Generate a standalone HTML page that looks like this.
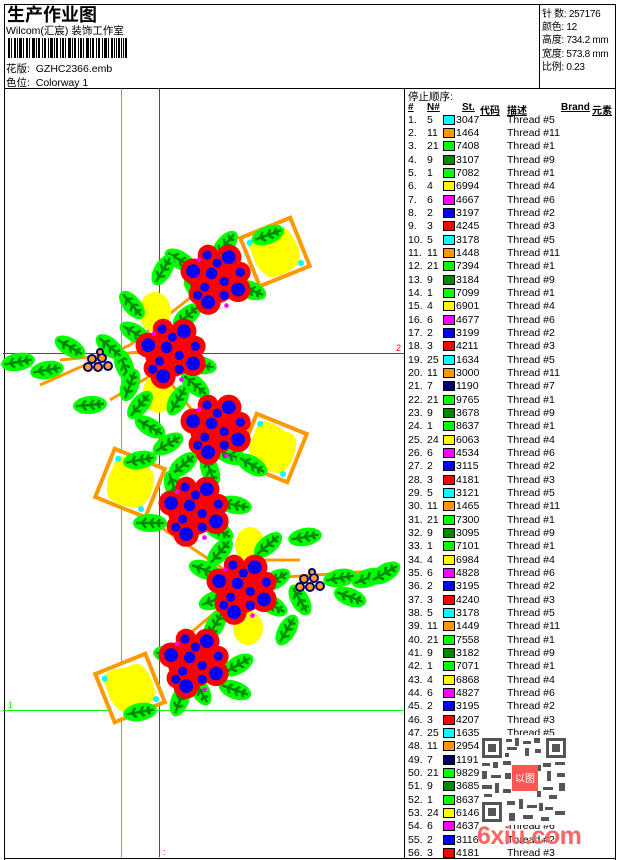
<!DOCTYPE html>
<html><head><meta charset="utf-8">
<style>
*{margin:0;padding:0;box-sizing:border-box}
body{width:620px;height:860px;background:#fff;position:relative;overflow:hidden;font-family:"Liberation Sans","Noto Sans CJK SC",sans-serif;font-size:10.5px;color:#000}
.ab{position:absolute}
.ln{position:absolute;background:#000}
.r{position:absolute;left:408px;height:13px;line-height:13px;white-space:nowrap;font-size:10.5px}
.r span{display:inline-block;vertical-align:top}
.r .a{width:19px}.r .b{width:16px}.r .c{width:51px}
.r i{display:inline-block;width:12px;height:10px;border:1px solid #000;margin:1px 1px 0 0;vertical-align:top}
.h span{position:absolute;font-weight:bold;text-decoration:underline;font-size:10px}
.rt div{position:absolute;left:542px;font-size:10px;white-space:nowrap;letter-spacing:-0.3px}
</style></head><body>
<div class="ln" style="left:4px;top:4px;width:612px;height:1px"></div>
<div class="ln" style="left:4px;top:4px;width:1px;height:856px"></div>
<div class="ln" style="left:615px;top:4px;width:1px;height:856px"></div>
<div class="ln" style="left:4px;top:858px;width:612px;height:1px"></div>
<div class="ln" style="left:4px;top:88px;width:612px;height:1px"></div>
<div class="ln" style="left:539px;top:4px;width:1px;height:84px"></div>
<div class="ln" style="left:404px;top:88px;width:1px;height:771px"></div>

<div class="ab" style="left:7px;top:1px;font-size:18px;font-weight:bold">生产作业图</div>
<div class="ab" style="left:6px;top:23px;font-size:10.5px">Wilcom(汇宸) 装饰工作室</div>
<svg class="ab" style="left:8px;top:38px" width="120" height="20">
<g fill="#000">
<rect x="0" y="0" width="2" height="20"/><rect x="3" y="0" width="1" height="20"/><rect x="6" y="0" width="2" height="20"/><rect x="9" y="0" width="1" height="20"/><rect x="11" y="0" width="3" height="20"/><rect x="15" y="0" width="1" height="20"/><rect x="18" y="0" width="2" height="20"/><rect x="21" y="0" width="1" height="20"/><rect x="24" y="0" width="3" height="20"/><rect x="28" y="0" width="1" height="20"/><rect x="30" y="0" width="2" height="20"/><rect x="34" y="0" width="1" height="20"/><rect x="36" y="0" width="2" height="20"/><rect x="40" y="0" width="1" height="20"/><rect x="42" y="0" width="3" height="20"/><rect x="46" y="0" width="1" height="20"/><rect x="48" y="0" width="2" height="20"/><rect x="52" y="0" width="1" height="20"/><rect x="54" y="0" width="2" height="20"/><rect x="57" y="0" width="1" height="20"/><rect x="60" y="0" width="3" height="20"/><rect x="64" y="0" width="1" height="20"/><rect x="66" y="0" width="2" height="20"/><rect x="70" y="0" width="1" height="20"/><rect x="72" y="0" width="2" height="20"/><rect x="75" y="0" width="1" height="20"/><rect x="78" y="0" width="3" height="20"/><rect x="82" y="0" width="1" height="20"/><rect x="84" y="0" width="2" height="20"/><rect x="88" y="0" width="1" height="20"/><rect x="90" y="0" width="2" height="20"/><rect x="94" y="0" width="1" height="20"/><rect x="96" y="0" width="3" height="20"/><rect x="100" y="0" width="1" height="20"/><rect x="103" y="0" width="2" height="20"/><rect x="106" y="0" width="1" height="20"/><rect x="108" y="0" width="1" height="20"/><rect x="110" y="0" width="2" height="20"/><rect x="113" y="0" width="1" height="20"/><rect x="115" y="0" width="1" height="20"/><rect x="117" y="0" width="2" height="20"/>
</g></svg>
<div class="ab" style="left:6px;top:61px">花版:&nbsp; GZHC2366.emb</div>
<div class="ab" style="left:6px;top:75px">色位:&nbsp; Colorway 1</div>

<div class="rt">
<div style="top:5px">针 数: 257176</div>
<div style="top:18px">颜色: 12</div>
<div style="top:31px">高度: 734.2 mm</div>
<div style="top:45px">宽度: 573.8 mm</div>
<div style="top:58px">比例: 0.23</div>
</div>

<div class="ab" style="left:121px;top:89px;width:1px;height:768px;background:#0f0"></div>
<div class="ab" style="left:159px;top:89px;width:1px;height:768px;background:#f00"></div>
<div class="ab" style="left:3px;top:353px;width:401px;height:1px;background:#f00"></div>
<div class="ab" style="left:3px;top:710px;width:401px;height:1px;background:#0f0"></div>
<div class="ab" style="left:396px;top:343px;color:#f00;font-size:9px">2</div>
<div class="ab" style="left:8px;top:700px;color:#0f0;font-size:9px">1</div>
<div class="ab" style="left:163px;top:847px;color:#f00;font-size:9px">:</div>

<svg class="ab" style="left:0;top:0" width="405" height="860">
<defs>
<g id="lf"><ellipse cx="0" cy="0" rx="17" ry="9" fill="#0f0"/><path d="M-14 0 L14 0 M-8 0 L-4 -5 M-8 0 L-4 5 M0 0 L4 -5 M0 0 L4 5 M7 0 L10 -4 M7 0 L10 4" stroke="#080" stroke-width="2.5"/></g>
<g id="fr"><rect x="-27" y="-26" width="54" height="52" fill="#fff" stroke="#f90" stroke-width="4"/><path d="M-22 -20 Q-10 -26 5 -20 Q20 -24 22 -8 Q26 8 18 20 Q0 26 -14 22 Q-24 10 -22 -4Z" fill="#ff0"/><circle cx="-20" cy="-18" r="3" fill="#0ff"/><circle cx="20" cy="20" r="3" fill="#0ff"/></g>
<g id="fl">
<circle cx="0" cy="0" r="22" fill="#f00"/><circle cx="-19" cy="-6" r="11" fill="#f00"/><circle cx="12" cy="-18" r="11" fill="#f00"/><circle cx="20" cy="10" r="11" fill="#f00"/><circle cx="-6" cy="21" r="11" fill="#f00"/><circle cx="22" cy="-5" r="9" fill="#f00"/><circle cx="-14" cy="14" r="9" fill="#f00"/><circle cx="-6" cy="-20" r="9" fill="#f00"/>
<g fill="#00f"><circle cx="-19" cy="-6" r="6"/><circle cx="12" cy="-18" r="6"/><circle cx="20" cy="10" r="6"/><circle cx="-6" cy="21" r="6"/><circle cx="-3" cy="-4" r="5"/><circle cx="8" cy="3" r="4"/><circle cx="-9" cy="8" r="4"/><circle cx="2" cy="-13" r="4"/><circle cx="22" cy="-5" r="4"/><circle cx="8" cy="15" r="4"/><circle cx="-7" cy="-20" r="4"/><circle cx="-15" cy="15" r="4"/></g>
<circle cx="-14" cy="-16" r="2" fill="#f0f"/><circle cx="10" cy="24" r="2" fill="#f0f"/>
</g>
<g id="br"><g fill="#006"><circle cx="-6" cy="-3" r="5"/><circle cx="4" cy="-4" r="5"/><circle cx="0" cy="5" r="5"/><circle cx="-10" cy="5" r="5"/><circle cx="10" cy="4" r="5"/><circle cx="2" cy="-10" r="4"/></g>
<g fill="#f93"><circle cx="-6" cy="-3" r="3"/><circle cx="4" cy="-4" r="3"/><circle cx="0" cy="5" r="3"/><circle cx="-10" cy="5" r="3"/><circle cx="10" cy="4" r="3"/><circle cx="2" cy="-10" r="2"/></g></g>
</defs>
<g stroke="#f90" stroke-width="3" fill="none">
<path d="M40 385 L130 345 L200 290"/><path d="M60 360 L160 350"/><path d="M110 400 L160 370 L200 420"/>
<path d="M150 520 L240 580 L390 570"/><path d="M230 560 L300 560"/><path d="M170 650 L230 600"/>
</g>
<use href="#fr" transform="translate(275,252) rotate(-22)"/>
<use href="#fr" transform="translate(272,448) rotate(22)"/>
<use href="#fr" transform="translate(130,483) rotate(22)"/>
<use href="#fr" transform="translate(130,688) rotate(-22)"/>
<g fill="#ff0"><ellipse cx="155" cy="312" rx="16" ry="20"/><ellipse cx="158" cy="393" rx="15" ry="20"/><ellipse cx="250" cy="545" rx="15" ry="18"/><ellipse cx="248" cy="628" rx="15" ry="17"/></g>
<g>
<use href="#lf" transform="translate(225,245) rotate(-50)"/><use href="#lf" transform="translate(268,235) rotate(-20)"/><use href="#lf" transform="translate(180,260) rotate(30)"/><use href="#lf" transform="translate(163,270) rotate(-60)"/><use href="#lf" transform="translate(198,290) rotate(40)"/><use href="#lf" transform="translate(250,290) rotate(20)"/><use href="#lf" transform="translate(132,305) rotate(50)"/><use href="#lf" transform="translate(135,333) rotate(30)"/><use href="#lf" transform="translate(187,316) rotate(-40)"/><use href="#lf" transform="translate(200,365) rotate(10)"/><use href="#lf" transform="translate(124,365) rotate(70)"/><use href="#lf" transform="translate(130,385) rotate(-70)"/><use href="#lf" transform="translate(195,385) rotate(40)"/><use href="#lf" transform="translate(90,405) rotate(-5)"/><use href="#lf" transform="translate(140,405) rotate(-50)"/><use href="#lf" transform="translate(18,362) rotate(-10)"/><use href="#lf" transform="translate(47,370) rotate(-10)"/><use href="#lf" transform="translate(70,347) rotate(30)"/><use href="#lf" transform="translate(110,347) rotate(40)"/><use href="#lf" transform="translate(150,427) rotate(30)"/><use href="#lf" transform="translate(168,444) rotate(-30)"/><use href="#lf" transform="translate(178,400) rotate(-60)"/><use href="#lf" transform="translate(230,455) rotate(20)"/><use href="#lf" transform="translate(252,465) rotate(30)"/><use href="#lf" transform="translate(183,465) rotate(-40)"/><use href="#lf" transform="translate(210,470) rotate(70)"/>
<use href="#lf" transform="translate(140,460) rotate(-10)"/><use href="#lf" transform="translate(174,487) rotate(70)"/><use href="#lf" transform="translate(235,505) rotate(10)"/><use href="#lf" transform="translate(150,523) rotate(0)"/><use href="#lf" transform="translate(218,530) rotate(30)"/><use href="#lf" transform="translate(220,552) rotate(-50)"/><use href="#lf" transform="translate(268,545) rotate(-40)"/><use href="#lf" transform="translate(305,537) rotate(-10)"/><use href="#lf" transform="translate(275,580) rotate(-30)"/><use href="#lf" transform="translate(205,570) rotate(20)"/><use href="#lf" transform="translate(215,600) rotate(-20)"/><use href="#lf" transform="translate(272,605) rotate(30)"/><use href="#lf" transform="translate(300,600) rotate(60)"/><use href="#lf" transform="translate(340,578) rotate(-10)"/><use href="#lf" transform="translate(368,578) rotate(-20)"/><use href="#lf" transform="translate(385,573) rotate(-30)"/><use href="#lf" transform="translate(350,597) rotate(20)"/><use href="#lf" transform="translate(287,630) rotate(-60)"/><use href="#lf" transform="translate(215,625) rotate(-60)"/><use href="#lf" transform="translate(170,655) rotate(10)"/><use href="#lf" transform="translate(238,665) rotate(-30)"/><use href="#lf" transform="translate(235,690) rotate(20)"/><use href="#lf" transform="translate(200,690) rotate(60)"/><use href="#lf" transform="translate(180,700) rotate(-70)"/><use href="#lf" transform="translate(140,712) rotate(-10)"/>
</g>
<use href="#fl" transform="translate(215,278) scale(1.15)"/>
<use href="#fl" transform="translate(170,352) scale(1.15)"/>
<use href="#fl" transform="translate(215,428) scale(1.15)"/>
<use href="#fl" transform="translate(193,510) scale(1.15)"/>
<use href="#fl" transform="translate(241,588) scale(1.15)"/>
<use href="#fl" transform="translate(193,662) scale(1.15)"/>
<use href="#br" transform="translate(98,362)"/>
<use href="#br" transform="translate(310,582)"/>
</svg>

<div class="ab" style="left:408px;top:89px">停止顺序:</div>
<div class="h"><span style="left:408px;top:102px">#</span><span style="left:427px;top:102px">N#</span><span style="left:462px;top:102px">St.</span><span style="left:480px;top:102px">代码</span><span style="left:507px;top:102px">描述</span><span style="left:561px;top:102px">Brand</span><span style="left:592px;top:102px">元素</span></div>

<div class="r" style="top:114px"><span class="a">1.</span><span class="b">5</span><i style="background:#0ff"></i><span class="c">3047</span><span>Thread #5</span></div>
<div class="r" style="top:127px"><span class="a">2.</span><span class="b">11</span><i style="background:#f90"></i><span class="c">1464</span><span>Thread #11</span></div>
<div class="r" style="top:140px"><span class="a">3.</span><span class="b">21</span><i style="background:#0f0"></i><span class="c">7408</span><span>Thread #1</span></div>
<div class="r" style="top:154px"><span class="a">4.</span><span class="b">9</span><i style="background:#080"></i><span class="c">3107</span><span>Thread #9</span></div>
<div class="r" style="top:167px"><span class="a">5.</span><span class="b">1</span><i style="background:#0f0"></i><span class="c">7082</span><span>Thread #1</span></div>
<div class="r" style="top:180px"><span class="a">6.</span><span class="b">4</span><i style="background:#ff0"></i><span class="c">6994</span><span>Thread #4</span></div>
<div class="r" style="top:194px"><span class="a">7.</span><span class="b">6</span><i style="background:#f0f"></i><span class="c">4667</span><span>Thread #6</span></div>
<div class="r" style="top:207px"><span class="a">8.</span><span class="b">2</span><i style="background:#00f"></i><span class="c">3197</span><span>Thread #2</span></div>
<div class="r" style="top:220px"><span class="a">9.</span><span class="b">3</span><i style="background:#f00"></i><span class="c">4245</span><span>Thread #3</span></div>
<div class="r" style="top:234px"><span class="a">10.</span><span class="b">5</span><i style="background:#0ff"></i><span class="c">3178</span><span>Thread #5</span></div>
<div class="r" style="top:247px"><span class="a">11.</span><span class="b">11</span><i style="background:#f90"></i><span class="c">1448</span><span>Thread #11</span></div>
<div class="r" style="top:260px"><span class="a">12.</span><span class="b">21</span><i style="background:#0f0"></i><span class="c">7394</span><span>Thread #1</span></div>
<div class="r" style="top:274px"><span class="a">13.</span><span class="b">9</span><i style="background:#080"></i><span class="c">3184</span><span>Thread #9</span></div>
<div class="r" style="top:287px"><span class="a">14.</span><span class="b">1</span><i style="background:#0f0"></i><span class="c">7099</span><span>Thread #1</span></div>
<div class="r" style="top:300px"><span class="a">15.</span><span class="b">4</span><i style="background:#ff0"></i><span class="c">6901</span><span>Thread #4</span></div>
<div class="r" style="top:314px"><span class="a">16.</span><span class="b">6</span><i style="background:#f0f"></i><span class="c">4677</span><span>Thread #6</span></div>
<div class="r" style="top:327px"><span class="a">17.</span><span class="b">2</span><i style="background:#00f"></i><span class="c">3199</span><span>Thread #2</span></div>
<div class="r" style="top:340px"><span class="a">18.</span><span class="b">3</span><i style="background:#f00"></i><span class="c">4211</span><span>Thread #3</span></div>
<div class="r" style="top:354px"><span class="a">19.</span><span class="b">25</span><i style="background:#0ff"></i><span class="c">1634</span><span>Thread #5</span></div>
<div class="r" style="top:367px"><span class="a">20.</span><span class="b">11</span><i style="background:#f90"></i><span class="c">3000</span><span>Thread #11</span></div>
<div class="r" style="top:380px"><span class="a">21.</span><span class="b">7</span><i style="background:#006"></i><span class="c">1190</span><span>Thread #7</span></div>
<div class="r" style="top:394px"><span class="a">22.</span><span class="b">21</span><i style="background:#0f0"></i><span class="c">9765</span><span>Thread #1</span></div>
<div class="r" style="top:407px"><span class="a">23.</span><span class="b">9</span><i style="background:#080"></i><span class="c">3678</span><span>Thread #9</span></div>
<div class="r" style="top:420px"><span class="a">24.</span><span class="b">1</span><i style="background:#0f0"></i><span class="c">8637</span><span>Thread #1</span></div>
<div class="r" style="top:434px"><span class="a">25.</span><span class="b">24</span><i style="background:#ff0"></i><span class="c">6063</span><span>Thread #4</span></div>
<div class="r" style="top:447px"><span class="a">26.</span><span class="b">6</span><i style="background:#f0f"></i><span class="c">4534</span><span>Thread #6</span></div>
<div class="r" style="top:460px"><span class="a">27.</span><span class="b">2</span><i style="background:#00f"></i><span class="c">3115</span><span>Thread #2</span></div>
<div class="r" style="top:474px"><span class="a">28.</span><span class="b">3</span><i style="background:#f00"></i><span class="c">4181</span><span>Thread #3</span></div>
<div class="r" style="top:487px"><span class="a">29.</span><span class="b">5</span><i style="background:#0ff"></i><span class="c">3121</span><span>Thread #5</span></div>
<div class="r" style="top:500px"><span class="a">30.</span><span class="b">11</span><i style="background:#f90"></i><span class="c">1465</span><span>Thread #11</span></div>
<div class="r" style="top:514px"><span class="a">31.</span><span class="b">21</span><i style="background:#0f0"></i><span class="c">7300</span><span>Thread #1</span></div>
<div class="r" style="top:527px"><span class="a">32.</span><span class="b">9</span><i style="background:#080"></i><span class="c">3095</span><span>Thread #9</span></div>
<div class="r" style="top:540px"><span class="a">33.</span><span class="b">1</span><i style="background:#0f0"></i><span class="c">7101</span><span>Thread #1</span></div>
<div class="r" style="top:554px"><span class="a">34.</span><span class="b">4</span><i style="background:#ff0"></i><span class="c">6984</span><span>Thread #4</span></div>
<div class="r" style="top:567px"><span class="a">35.</span><span class="b">6</span><i style="background:#f0f"></i><span class="c">4828</span><span>Thread #6</span></div>
<div class="r" style="top:580px"><span class="a">36.</span><span class="b">2</span><i style="background:#00f"></i><span class="c">3195</span><span>Thread #2</span></div>
<div class="r" style="top:594px"><span class="a">37.</span><span class="b">3</span><i style="background:#f00"></i><span class="c">4240</span><span>Thread #3</span></div>
<div class="r" style="top:607px"><span class="a">38.</span><span class="b">5</span><i style="background:#0ff"></i><span class="c">3178</span><span>Thread #5</span></div>
<div class="r" style="top:620px"><span class="a">39.</span><span class="b">11</span><i style="background:#f90"></i><span class="c">1449</span><span>Thread #11</span></div>
<div class="r" style="top:634px"><span class="a">40.</span><span class="b">21</span><i style="background:#0f0"></i><span class="c">7558</span><span>Thread #1</span></div>
<div class="r" style="top:647px"><span class="a">41.</span><span class="b">9</span><i style="background:#080"></i><span class="c">3182</span><span>Thread #9</span></div>
<div class="r" style="top:660px"><span class="a">42.</span><span class="b">1</span><i style="background:#0f0"></i><span class="c">7071</span><span>Thread #1</span></div>
<div class="r" style="top:674px"><span class="a">43.</span><span class="b">4</span><i style="background:#ff0"></i><span class="c">6868</span><span>Thread #4</span></div>
<div class="r" style="top:687px"><span class="a">44.</span><span class="b">6</span><i style="background:#f0f"></i><span class="c">4827</span><span>Thread #6</span></div>
<div class="r" style="top:700px"><span class="a">45.</span><span class="b">2</span><i style="background:#00f"></i><span class="c">3195</span><span>Thread #2</span></div>
<div class="r" style="top:714px"><span class="a">46.</span><span class="b">3</span><i style="background:#f00"></i><span class="c">4207</span><span>Thread #3</span></div>
<div class="r" style="top:727px"><span class="a">47.</span><span class="b">25</span><i style="background:#0ff"></i><span class="c">1635</span><span>Thread #5</span></div>
<div class="r" style="top:740px"><span class="a">48.</span><span class="b">11</span><i style="background:#f90"></i><span class="c">2954</span><span>Thread #11</span></div>
<div class="r" style="top:754px"><span class="a">49.</span><span class="b">7</span><i style="background:#006"></i><span class="c">1191</span><span>Thread #7</span></div>
<div class="r" style="top:767px"><span class="a">50.</span><span class="b">21</span><i style="background:#0f0"></i><span class="c">9829</span><span>Thread #1</span></div>
<div class="r" style="top:780px"><span class="a">51.</span><span class="b">9</span><i style="background:#080"></i><span class="c">3685</span><span>Thread #9</span></div>
<div class="r" style="top:794px"><span class="a">52.</span><span class="b">1</span><i style="background:#0f0"></i><span class="c">8637</span><span>Thread #1</span></div>
<div class="r" style="top:807px"><span class="a">53.</span><span class="b">24</span><i style="background:#ff0"></i><span class="c">6146</span><span>Thread #4</span></div>
<div class="r" style="top:820px"><span class="a">54.</span><span class="b">6</span><i style="background:#f0f"></i><span class="c">4637</span><span>Thread #6</span></div>
<div class="r" style="top:834px"><span class="a">55.</span><span class="b">2</span><i style="background:#00f"></i><span class="c">3116</span><span>Thread #2</span></div>
<div class="r" style="top:847px"><span class="a">56.</span><span class="b">3</span><i style="background:#f00"></i><span class="c">4181</span><span>Thread #3</span></div>

<svg class="ab" style="left:479px;top:735px" width="90" height="90">
<rect x="0" y="0" width="90" height="90" fill="#fff"/>
<g fill="#555">
<rect x="3" y="3" width="20" height="20"/><rect x="67" y="3" width="20" height="20"/><rect x="3" y="67" width="20" height="20"/>
</g>
<g fill="#fff"><rect x="6" y="6" width="14" height="14"/><rect x="70" y="6" width="14" height="14"/><rect x="6" y="70" width="14" height="14"/></g>
<g fill="#555"><rect x="9" y="9" width="8" height="8"/><rect x="73" y="9" width="8" height="8"/><rect x="9" y="73" width="8" height="8"/>
<rect x="27" y="4" width="6" height="3"/><rect x="36" y="3" width="4" height="8"/><rect x="44" y="6" width="8" height="3"/><rect x="55" y="3" width="6" height="5"/><rect x="28" y="12" width="10" height="3"/><rect x="46" y="13" width="4" height="8"/><rect x="56" y="14" width="6" height="4"/>
<rect x="3" y="28" width="8" height="3"/><rect x="14" y="27" width="5" height="6"/><rect x="24" y="26" width="8" height="4"/><rect x="3" y="36" width="5" height="8"/><rect x="12" y="40" width="10" height="3"/><rect x="3" y="50" width="10" height="4"/><rect x="16" y="48" width="4" height="10"/><rect x="24" y="54" width="8" height="4"/><rect x="5" y="59" width="8" height="3"/>
<rect x="64" y="28" width="8" height="4"/><rect x="76" y="27" width="10" height="3"/><rect x="68" y="36" width="4" height="10"/><rect x="78" y="38" width="8" height="4"/><rect x="64" y="52" width="10" height="3"/><rect x="80" y="48" width="6" height="8"/><rect x="70" y="60" width="8" height="4"/>
<rect x="28" y="66" width="8" height="4"/><rect x="40" y="64" width="4" height="10"/><rect x="48" y="70" width="10" height="3"/><rect x="30" y="78" width="6" height="8"/><rect x="44" y="80" width="10" height="4"/><rect x="60" y="68" width="4" height="8"/><rect x="66" y="72" width="8" height="3"/><rect x="76" y="76" width="10" height="4"/><rect x="62" y="82" width="8" height="4"/>
<rect x="26" y="38" width="6" height="6"/><rect x="58" y="30" width="4" height="6"/><rect x="58" y="56" width="4" height="6"/><rect x="26" y="18" width="4" height="4"/></g>
<rect x="33" y="30" width="26" height="26" fill="#f55"/>
<text x="46" y="47" font-size="10" fill="#fff" text-anchor="middle" font-family="Noto Sans CJK SC,sans-serif">以图</text>
</svg>
<div class="ab" style="left:477px;top:822px;font-family:'Liberation Sans',sans-serif;font-weight:bold;font-size:25px;color:#f66;letter-spacing:-0.5px">6xiu.com</div>
</body></html>
